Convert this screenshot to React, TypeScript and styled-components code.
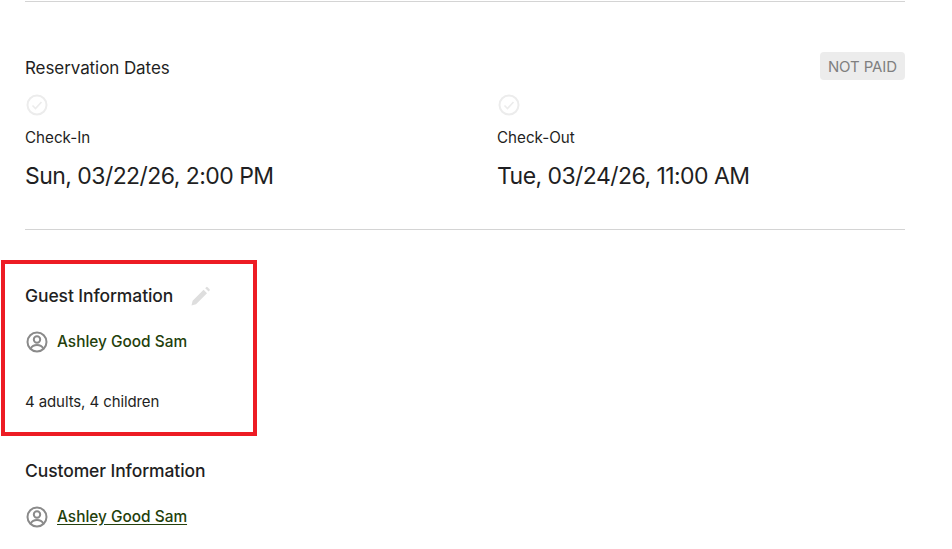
import React from 'react'
import styled, { createGlobalStyle } from 'styled-components'

const GlobalStyle = createGlobalStyle`
  html, body {
    margin: 0;
    padding: 0;
    background: #fff;
    overflow: hidden;
  }
  body {
    font-family: Inter, "Liberation Sans", sans-serif;
    color: #1f1f23;
  }
`

const Page = styled.div`
  width: 952px;
  height: 549px;
  padding: 1px 47px 0 25px;
  box-sizing: border-box;
  overflow: hidden;
`

const Divider = styled.hr`
  margin: 0;
  border: 0;
  border-top: 1px solid #d4d4d4;
`

const DatesSection = styled.section`
  padding-top: 50px;
  height: 227px;
  box-sizing: border-box;
`

const DatesHeader = styled.div`
  display: flex;
  justify-content: space-between;
  align-items: flex-start;
  height: 32px;
`

const SectionLabel = styled.h3`
  margin: 0;
  font-size: 17px;
  line-height: 32px;
  font-weight: 400;
  letter-spacing: -0.08px;
`

const Badge = styled.span`
  background: #ececec;
  color: #7f7f7f;
  border-radius: 4px;
  font-size: 15px;
  line-height: 27px;
  padding: 1px 8px 0;
  letter-spacing: -0.1px;
`

const DatesGrid = styled.div`
  display: grid;
  grid-template-columns: 472px 1fr;
  margin-top: 10px;
`

const DateColumn = styled.div`
  display: flex;
  flex-direction: column;
  align-items: flex-start;
`

const CheckIcon = styled.svg`
  display: block;
  width: 22px;
  height: 22px;
  margin-left: 1px;
  color: #ececec;
`

const DateLabel = styled.div`
  margin-top: 12px;
  font-size: 15.2px;
  line-height: 20px;
`

const DateValue = styled.div`
  margin-top: 13px;
  font-size: 23px;
  line-height: 30px;
  letter-spacing: -0.55px;
`

const Highlight = styled.section`
  width: 256px;
  height: 176px;
  margin: 30px 0 0 -24px;
  padding: 19px 0 0 20px;
  border: 4px solid #ed1c24;
  box-sizing: border-box;
`

const InfoHeading = styled.div`
  display: flex;
  align-items: center;
  gap: 18px;
  height: 26px;
`

const InfoTitle = styled.h3`
  margin: 0;
  font-size: 17.5px;
  line-height: 26px;
  font-weight: 500;
  letter-spacing: -0.1px;
`

const PencilIcon = styled.svg`
  display: block;
  width: 20px;
  height: 20px;
  color: #dedede;
`

const PersonRow = styled.div`
  display: flex;
  align-items: center;
  gap: 8px;
  height: 24px;
  margin-top: 21px;
`

const PersonIcon = styled.svg`
  display: block;
  width: 24px;
  height: 24px;
  color: #8a8a8a;
`

const PersonName = styled.a<{ $underlined?: boolean }>`
  color: #243f0c;
  font-size: 15.4px;
  line-height: 20px;
  font-weight: 500;
  text-decoration: ${(p) => (p.$underlined ? 'underline' : 'none')};
  text-underline-offset: 2px;
`

const GuestCount = styled.div`
  margin-top: 36px;
  font-size: 15px;
  line-height: 24px;
  letter-spacing: -0.1px;
`

const CustomerSection = styled.section`
  padding-top: 22px;
`

const CircleCheck = () => (
  <CheckIcon viewBox="0 0 22 22" fill="none" stroke="currentColor" strokeWidth="2">
    <circle cx="11" cy="11" r="9.5" />
    <path d="M6.5 11.5l3 3 6-6.5" strokeWidth="1.6" />
  </CheckIcon>
)

const Person = () => (
  <PersonIcon viewBox="0 0 24 24" fill="none" stroke="currentColor" strokeWidth="2">
    <circle cx="12" cy="12" r="9.5" />
    <circle cx="12" cy="9.5" r="3.2" />
    <path d="M5.8 18.5c1.2-2.4 3.4-3.4 6.2-3.4s5 1 6.2 3.4" />
  </PersonIcon>
)

const Pencil = () => (
  <PencilIcon viewBox="0 0 20 20" fill="currentColor">
    <path d="M0.5 19.5L1.6 14.8 12.6 3.8l3.4 3.4-11 11zM14.2 2.2l1-1q.7-.7 1.4 0l2 2q.7.7 0 1.4l-1 1z" />
  </PencilIcon>
)

export default function App() {
  return (
    <Page>
      <GlobalStyle />
      <Divider />
      <DatesSection>
        <DatesHeader>
          <SectionLabel>Reservation Dates</SectionLabel>
          <Badge>NOT PAID</Badge>
        </DatesHeader>
        <DatesGrid>
          <DateColumn>
            <CircleCheck />
            <DateLabel>Check-In</DateLabel>
            <DateValue>Sun, 03/22/26, 2:00 PM</DateValue>
          </DateColumn>
          <DateColumn>
            <CircleCheck />
            <DateLabel>Check-Out</DateLabel>
            <DateValue>Tue, 03/24/26, 11:00 AM</DateValue>
          </DateColumn>
        </DatesGrid>
      </DatesSection>
      <Divider />
      <Highlight>
        <InfoHeading>
          <InfoTitle>Guest Information</InfoTitle>
          <Pencil />
        </InfoHeading>
        <PersonRow>
          <Person />
          <PersonName>Ashley Good Sam</PersonName>
        </PersonRow>
        <GuestCount>4 adults, 4 children</GuestCount>
      </Highlight>
      <CustomerSection>
        <InfoHeading>
          <InfoTitle>Customer Information</InfoTitle>
        </InfoHeading>
        <PersonRow>
          <Person />
          <PersonName $underlined>Ashley Good Sam</PersonName>
        </PersonRow>
      </CustomerSection>
    </Page>
  )
}
